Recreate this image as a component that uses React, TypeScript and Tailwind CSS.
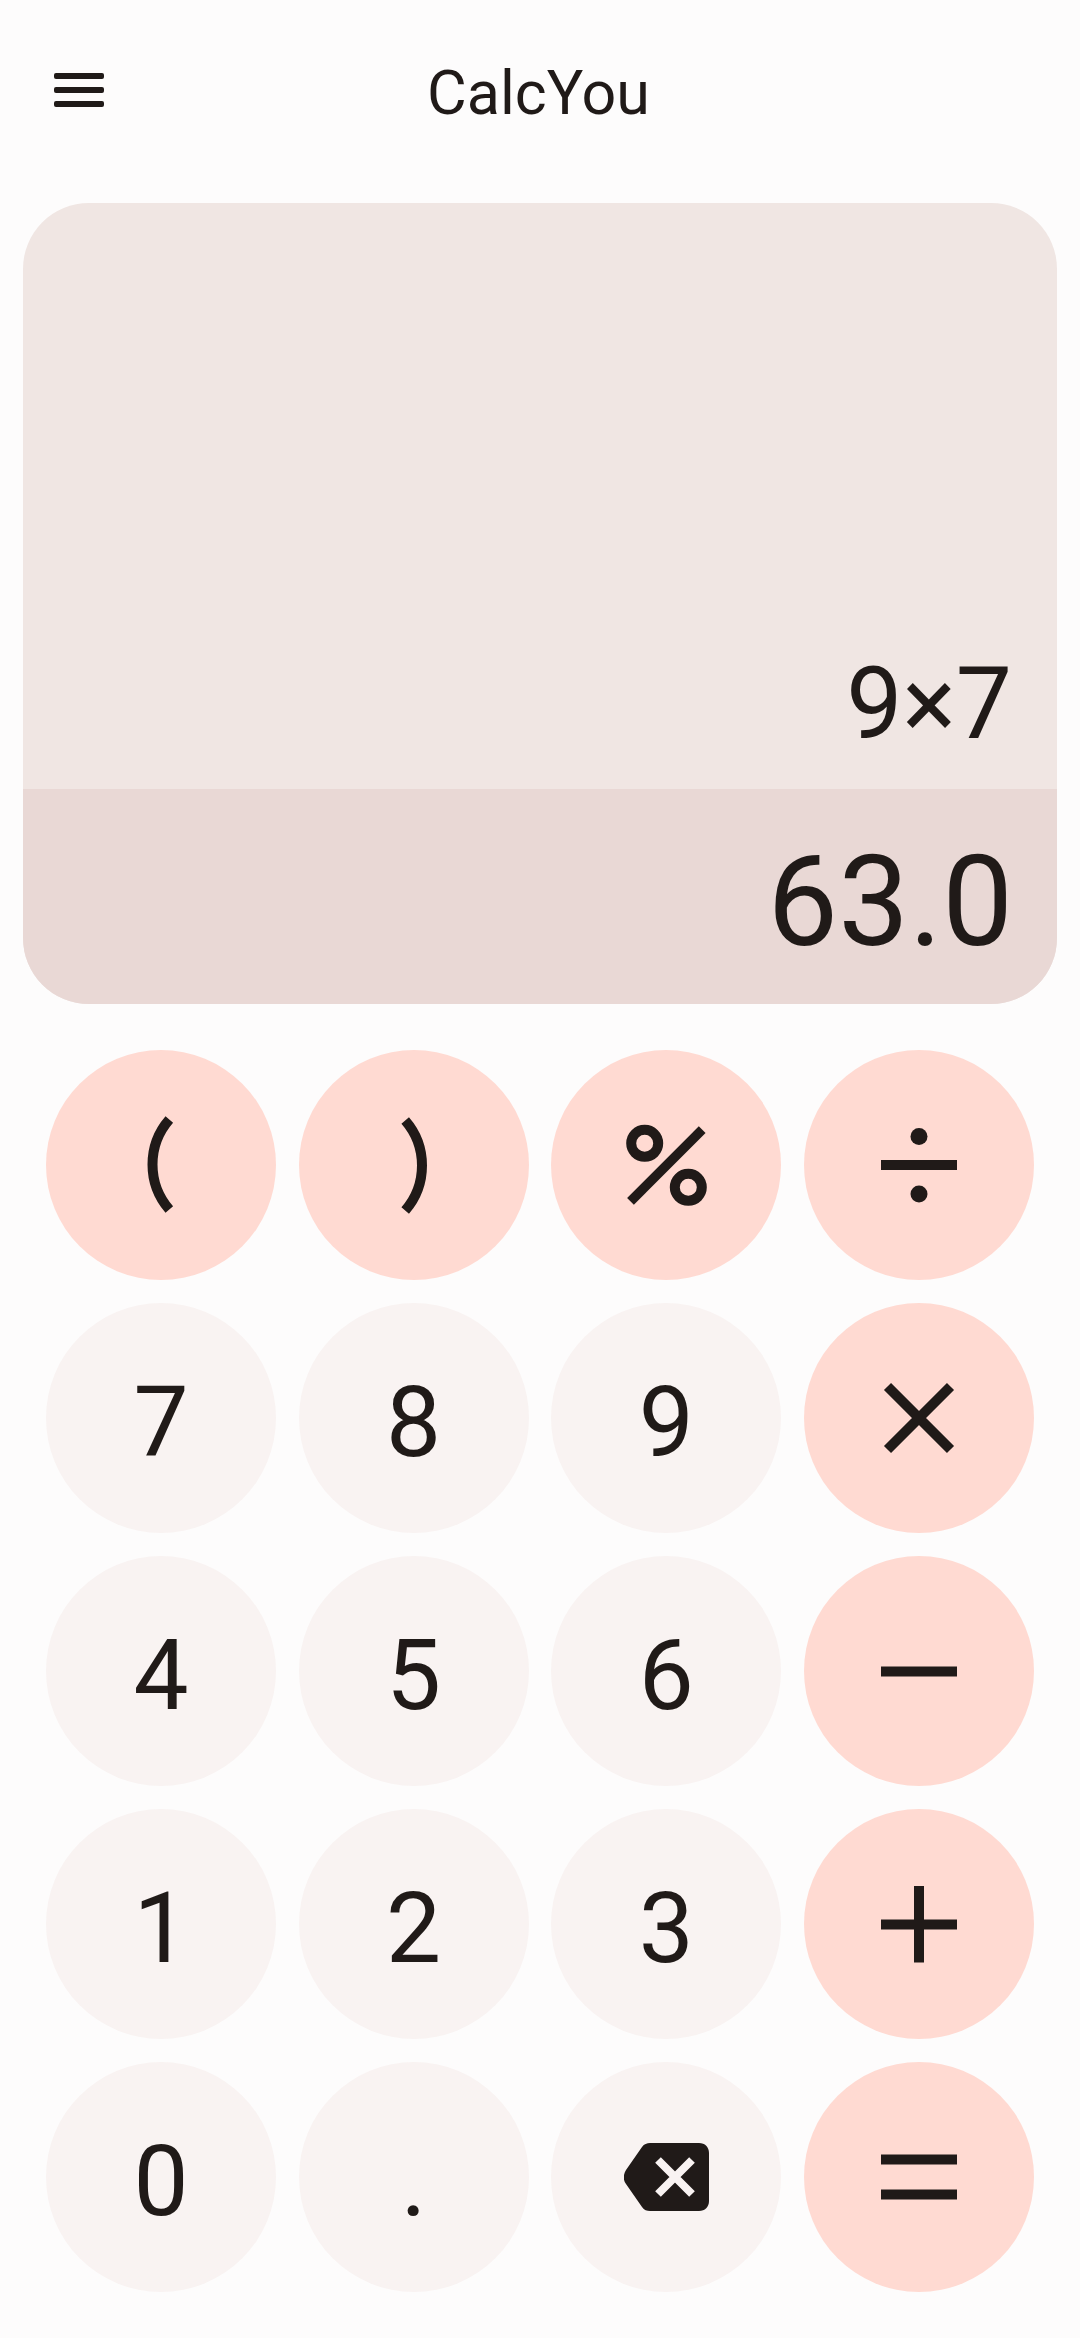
const OPERATOR = 'bg-[#ffdad2]';
const NUMBER = 'bg-[#f9f3f2]';
const INK = '#201a18';

const MenuIcon = () => (
    <svg width="52" height="36" viewBox="0 0 52 36" fill={INK}>
        <rect x="1" y="0" width="50" height="6" rx="2" />
        <rect x="1" y="14" width="50" height="6" rx="2" />
        <rect x="1" y="28" width="50" height="6" rx="2" />
    </svg>
);

const BackspaceIcon = () => (
    <svg width="85" height="68" viewBox="0 0 85 68">
        <path
            d="M26 0H75C81 0 85 4 85 10V58C85 64 81 68 75 68H26C23 68 20 67 18 64L2 41C-1 37 -1 32 2 27L18 4C20 1 23 0 26 0Z"
            fill={INK}
        />
        <path d="M34 17L68 51M68 17L34 51" stroke="#f9f3f2" strokeWidth="8" />
    </svg>
);

// operator glyphs, drawn around the middle of the key
const OpIcon = ({ children }: any) => (
    <svg width="110" height="110" viewBox="-55 -55 110 110" fill="none" stroke={INK} strokeWidth="10">
        {children}
    </svg>
);

const icons: any = {
    '(': <path d="M8.3 -45.5A68.7 68.7 0 0 0 8.3 44.5" />,
    ')': <path d="M-8.8 -44.5A68.7 68.7 0 0 1 -8.8 45.5" />,
    '%': (
        <>
            <circle cx="-21.3" cy="-21.7" r="13.5" />
            <circle cx="22.3" cy="22.3" r="13.5" />
            <path d="M36.2 -35.3L-35.5 36.3" strokeWidth="9.5" />
        </>
    ),
    '÷': (
        <>
            <path d="M-38 0H38" />
            <circle cx="0" cy="-28.5" r="8.5" fill={INK} stroke="none" />
            <circle cx="0" cy="29" r="8.5" fill={INK} stroke="none" />
        </>
    ),
    '×': <path d="M-31.5 -31.5L31.5 31.5M31.5 -31.5L-31.5 31.5" />,
    '−': <path d="M-38 0.5H38" />,
    '+': <path d="M-38 0.5H38M0 -38V38.5" />,
    '=': <path d="M-38 -17.5H38M-38 17.5H38" />,
};

const Key = ({ label, color, children }: any) => (
    <button className={`flex items-center justify-center w-[230px] h-[230px] rounded-full ${color} text-[98px] leading-none text-[#201a18]`}>
        {children || <span className="pt-[10px]">{label}</span>}
    </button>
);

const App = () => {
    const keys = [
        ['(', OPERATOR],
        [')', OPERATOR],
        ['%', OPERATOR],
        ['÷', OPERATOR],
        ['7', NUMBER],
        ['8', NUMBER],
        ['9', NUMBER],
        ['×', OPERATOR],
        ['4', NUMBER],
        ['5', NUMBER],
        ['6', NUMBER],
        ['−', OPERATOR],
        ['1', NUMBER],
        ['2', NUMBER],
        ['3', NUMBER],
        ['+', OPERATOR],
        ['0', NUMBER],
        ['.', NUMBER],
    ];

    return (
        <div className="w-[1080px] h-[2338px] overflow-hidden bg-[#fdfcfc] font-['Roboto',sans-serif] text-[#201a18]">
            <header className="grid grid-cols-[1fr_auto_1fr] items-center h-[203px] pl-[53px] pr-[56px] pb-[22px]">
                <MenuIcon />
                <h1 className="pt-[5px] text-[61px] leading-none font-normal">CalcYou</h1>
            </header>

            <section className="flex flex-col h-[801px] mx-[23px] rounded-[66px] overflow-hidden bg-[#f0e6e3]">
                <div className="flex flex-1 items-end justify-end pr-[45px] pb-[35px] text-[100px] leading-none">
                    9×7
                </div>
                <div className="flex items-center justify-end h-[215px] pt-[10px] pr-[44px] bg-[#e9d8d5] text-[126px] leading-none">
                    63.0
                </div>
            </section>

            <div className="grid grid-cols-4 gap-x-[22.67px] gap-y-[23px] mt-[46px] px-[46px]">
                {keys.map(([label, color]) => (
                    <Key key={label} label={label} color={color}>
                        {icons[label] && <OpIcon>{icons[label]}</OpIcon>}
                    </Key>
                ))}
                <Key color={NUMBER}>
                    <BackspaceIcon />
                </Key>
                <Key color={OPERATOR}>
                    <OpIcon>{icons['=']}</OpIcon>
                </Key>
            </div>
        </div>
    );
};

export default App;
